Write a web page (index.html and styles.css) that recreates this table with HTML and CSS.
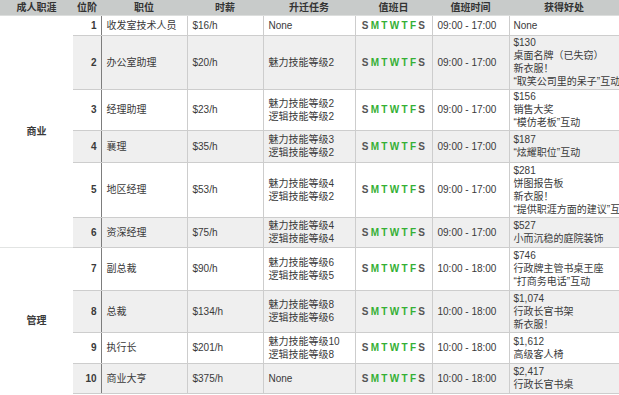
FILE: index.html
```html
<!DOCTYPE html>
<html lang="zh">
<head>
<meta charset="utf-8">
<title>成人职涯 - 商业</title>
<link rel="stylesheet" href="styles.css">
</head>
<body>
<table class="career">
  <colgroup>
    <col class="c-cat"><col class="c-rank"><col class="c-job"><col class="c-wage"><col class="c-task"><col class="c-days"><col class="c-time"><col class="c-perk">
  </colgroup>
  <thead>
    <tr class="head">
      <th>成人职涯</th><th>位阶</th><th>职位</th><th>时薪</th><th>升迁任务</th><th>值班日</th><th>值班时间</th><th>获得好处</th>
    </tr>
  </thead>
  <tbody>
    <tr class="odd r1">
      <td class="cat" rowspan="6">商业</td>
      <td class="rank">1</td><td>收发室技术人员</td><td>$16/h</td><td>None</td>
      <td class="days"><span class="off">S</span><span class="on">M</span><span class="on">T</span><span class="on">W</span><span class="on">T</span><span class="on">F</span><span class="off">S</span></td>
      <td>09:00 - 17:00</td><td class="perk">None</td>
    </tr>
    <tr class="even r2">
      <td class="rank">2</td><td>办公室助理</td><td>$20/h</td><td>魅力技能等级2</td>
      <td class="days"><span class="off">S</span><span class="on">M</span><span class="on">T</span><span class="on">W</span><span class="on">T</span><span class="on">F</span><span class="off">S</span></td>
      <td>09:00 - 17:00</td><td class="perk">$130<br>桌面名牌（已失窃）<br>新衣服！<br>“取笑公司里的呆子”互动</td>
    </tr>
    <tr class="odd r3">
      <td class="rank">3</td><td>经理助理</td><td>$23/h</td><td>魅力技能等级2<br>逻辑技能等级2</td>
      <td class="days"><span class="off">S</span><span class="on">M</span><span class="on">T</span><span class="on">W</span><span class="on">T</span><span class="on">F</span><span class="off">S</span></td>
      <td>09:00 - 17:00</td><td class="perk">$156<br>销售大奖<br>“模仿老板”互动</td>
    </tr>
    <tr class="even r4">
      <td class="rank">4</td><td>襄理</td><td>$35/h</td><td>魅力技能等级3<br>逻辑技能等级2</td>
      <td class="days"><span class="off">S</span><span class="on">M</span><span class="on">T</span><span class="on">W</span><span class="on">T</span><span class="on">F</span><span class="off">S</span></td>
      <td>09:00 - 17:00</td><td class="perk">$187<br>“炫耀职位”互动</td>
    </tr>
    <tr class="odd r5">
      <td class="rank">5</td><td>地区经理</td><td>$53/h</td><td>魅力技能等级4<br>逻辑技能等级2</td>
      <td class="days"><span class="off">S</span><span class="on">M</span><span class="on">T</span><span class="on">W</span><span class="on">T</span><span class="on">F</span><span class="off">S</span></td>
      <td>09:00 - 17:00</td><td class="perk">$281<br>饼图报告板<br>新衣服！<br>“提供职涯方面的建议”互动</td>
    </tr>
    <tr class="even r6">
      <td class="rank">6</td><td>资深经理</td><td>$75/h</td><td>魅力技能等级4<br>逻辑技能等级4</td>
      <td class="days"><span class="off">S</span><span class="on">M</span><span class="on">T</span><span class="on">W</span><span class="on">T</span><span class="on">F</span><span class="off">S</span></td>
      <td>09:00 - 17:00</td><td class="perk">$527<br>小而沉稳的庭院装饰</td>
    </tr>
    <tr class="odd r7">
      <td class="cat cat-split" rowspan="4">管理</td>
      <td class="rank">7</td><td>副总裁</td><td>$90/h</td><td>魅力技能等级6<br>逻辑技能等级5</td>
      <td class="days"><span class="off">S</span><span class="on">M</span><span class="on">T</span><span class="on">W</span><span class="on">T</span><span class="on">F</span><span class="off">S</span></td>
      <td>10:00 - 18:00</td><td class="perk">$746<br>行政牌主管书桌王座<br>“打商务电话”互动</td>
    </tr>
    <tr class="even r8">
      <td class="rank">8</td><td>总裁</td><td>$134/h</td><td>魅力技能等级8<br>逻辑技能等级6</td>
      <td class="days"><span class="off">S</span><span class="on">M</span><span class="on">T</span><span class="on">W</span><span class="on">T</span><span class="on">F</span><span class="off">S</span></td>
      <td>10:00 - 18:00</td><td class="perk">$1,074<br>行政长官书架<br>新衣服！</td>
    </tr>
    <tr class="odd r9">
      <td class="rank">9</td><td>执行长</td><td>$201/h</td><td>魅力技能等级10<br>逻辑技能等级8</td>
      <td class="days"><span class="off">S</span><span class="on">M</span><span class="on">T</span><span class="on">W</span><span class="on">T</span><span class="on">F</span><span class="off">S</span></td>
      <td>10:00 - 18:00</td><td class="perk">$1,612<br>高级客人椅</td>
    </tr>
    <tr class="even r10">
      <td class="rank">10</td><td>商业大亨</td><td>$375/h</td><td>None</td>
      <td class="days"><span class="off">S</span><span class="on">M</span><span class="on">T</span><span class="on">W</span><span class="on">T</span><span class="on">F</span><span class="off">S</span></td>
      <td>10:00 - 18:00</td><td class="perk">$2,417<br>行政长官书桌</td>
    </tr>
  </tbody>
</table>
</body>
</html>
```

FILE: styles.css
```css
html, body {
  margin: 0;
  padding: 0;
  background: #ffffff;
  overflow: hidden;
}

.career {
  width: 619px;
  table-layout: fixed;
  border-collapse: collapse;
  font-family: "Liberation Sans", "Noto Sans CJK SC", sans-serif;
  font-size: 10px;
  line-height: 13px;
  color: #3a3a3a;
}

.c-cat { width: 73px; }
.c-rank { width: 28px; }
.c-job { width: 86px; }
.c-wage { width: 76px; }
.c-task { width: 92px; }
.c-days { width: 77px; }
.c-time { width: 77px; }
.c-perk { width: 110px; }

/* row heights taken from the reference rows */
.head { height: 15px; }
.r1 { height: 20px; }
.r2 { height: 54px; }
.r3 { height: 41px; }
.r4 { height: 32px; }
.r5 { height: 55px; }
.r6 { height: 30px; }
.r7 { height: 43px; }
.r8 { height: 42px; }
.r9 { height: 31px; }
.r10 { height: 30px; }

.career th {
  padding: 0;
  background: #c8cbca;
  font-weight: bold;
  text-align: center;
  color: #333333;
  border-bottom: 1px solid #dcdedd;
  white-space: nowrap;
  overflow: hidden;
}

.career td {
  padding: 0 5px;
  vertical-align: middle;
  text-align: left;
  border: 1px solid #cdcdcd;
  white-space: nowrap;
  overflow: hidden;
}

.career tr.odd td { background: #ffffff; }
.career tr.even td { background: #efefef; }

.career td.rank {
  background: #e8e8e8;
  text-align: right;
  font-weight: bold;
  padding: 0 4px 0 0;
  border-left: none;
  border-right: 1px solid #7d7d7d;
}

.career td.cat {
  background: #bdc2c0;
  font-weight: bold;
  text-align: center;
  border: none;
  padding: 0;
}

.career td.cat-split {
  border-top: 1px solid #e2e4e3;
}

.career td.days {
  text-align: center;
  font-weight: bold;
  letter-spacing: 2.3px;
  padding: 0 0 0 2px;
}

.days .off { color: #555555; }
.days .on { color: #35b035; }

.career td.perk {
  padding-left: 4px;
  border-right: none;
}
```
